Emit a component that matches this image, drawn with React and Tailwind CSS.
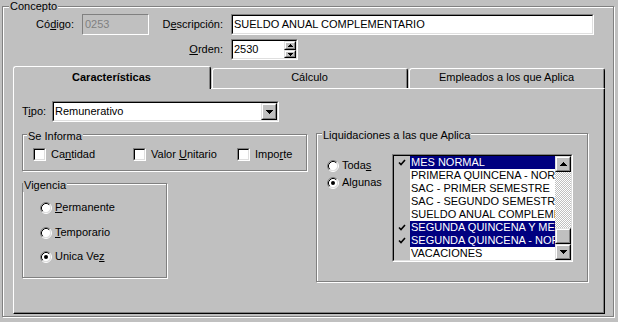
import React from 'react';

const Sunken = ({ className = '', inner = '', children }) => (
  <div className={`border border-t-[#808080] border-l-[#808080] border-b-white border-r-white ${className}`}>
    <div className={`h-full border border-t-black border-l-black border-b-[#dfdfdf] border-r-[#dfdfdf] ${inner}`}>
      {children}
    </div>
  </div>
);

const Raised = ({ className = '', children }) => (
  <div className={`border border-t-[#dfdfdf] border-l-[#dfdfdf] border-b-black border-r-black bg-[#c0c0c0] ${className}`}>
    <div className="flex h-full items-center justify-center border border-t-white border-l-white border-b-[#808080] border-r-[#808080]">
      {children}
    </div>
  </div>
);

const Group = ({ title, className = '', titleClass = '', children }) => (
  <div className={`border border-[#808080] shadow-[inset_1px_1px_0_#fff,1px_1px_0_#fff] ${className}`}>
    <div className={`w-fit bg-[#c0c0c0] px-px ${titleClass}`}>{title}</div>
    {children}
  </div>
);

const Arrow = ({ up, w = 7, h = 4 }) => (
  <svg width={w} height={h} viewBox={`0 0 ${w} ${h}`} shapeRendering="crispEdges">
    <polygon points={up ? `0,${h} ${w},${h} ${w / 2},0` : `0,0 ${w},0 ${w / 2},${h}`} fill="#000" />
  </svg>
);

const RadioDot = ({ checked }) => (
  <svg width="12" height="12" viewBox="0 0 12 12" className="shrink-0">
    <circle cx="6" cy="6" r="4.5" fill="#fff" />
    <path d="M2.11 9.89 A5.5 5.5 0 0 1 9.89 2.11" stroke="#808080" fill="none" />
    <path d="M9.89 2.11 A5.5 5.5 0 0 1 2.11 9.89" stroke="#fff" fill="none" />
    <path d="M2.82 9.18 A4.5 4.5 0 0 1 9.18 2.82" stroke="#000" fill="none" />
    <path d="M9.18 2.82 A4.5 4.5 0 0 1 2.82 9.18" stroke="#dfdfdf" fill="none" />
    {checked && <circle cx="6" cy="6" r="2" fill="#000" />}
  </svg>
);

const Radio = ({ checked, className = '', children }) => (
  <div className={`flex h-[13px] items-center ${className}`}>
    <RadioDot checked={checked} />
    <span className="ml-[3px]">{children}</span>
  </div>
);

const CheckBox = ({ className = '', children }) => (
  <div className={`flex h-[13px] items-center ${className}`}>
    <Sunken className="h-[13px] w-[13px] shrink-0" inner="bg-white" />
    <span className="ml-[5px]">{children}</span>
  </div>
);

const Tick = () => (
  <svg width="8" height="7" viewBox="0 0 8 7">
    <path d="M1 3.5 L3 5.5 L7 1" stroke="#000" strokeWidth="1.6" fill="none" />
  </svg>
);

const Tab = ({ className = '', children }) => (
  <div className={`h-[20px] rounded-t-[3px] border-l border-r border-t border-l-white border-r-black border-t-white ${className}`}>
    <div className="h-full border-r border-[#808080] pt-[2px] text-center">{children}</div>
  </div>
);

const liquidaciones = [
  { name: 'MES NORMAL', checked: true },
  { name: 'PRIMERA QUINCENA - NORMAL', checked: false },
  { name: 'SAC - PRIMER SEMESTRE', checked: false },
  { name: 'SAC - SEGUNDO SEMESTRE', checked: false },
  { name: 'SUELDO ANUAL COMPLEMENTARIO', checked: false },
  { name: 'SEGUNDA QUINCENA Y MES', checked: true },
  { name: 'SEGUNDA QUINCENA - NORMAL', checked: true },
  { name: 'VACACIONES', checked: false },
];

export default function App() {
  return (
    <div className="h-[322px] w-[618px] overflow-hidden bg-[#c0c0c0] pt-[6px] font-['Liberation_Sans',Arial,sans-serif] text-[11px] leading-[13px] text-black">
      <Group title="Concepto" className="ml-[2px] h-[311px] w-[612px]" titleClass="-mt-[7px] ml-[6px]">
        {/* Código / Descripción */}
        <div className="mt-px flex h-[21px] items-center">
          <span className="w-[71px] text-right">Có<u>d</u>igo:</span>
          <div className="ml-[8px] flex h-[21px] w-[67px] items-center border border-t-[#808080] border-l-[#808080] border-b-white border-r-white pl-[2px] text-[#808080]">
            0253
          </div>
          <span className="w-[74px] text-right">D<u>e</u>scripción:</span>
          <Sunken className="ml-[8px] h-[21px] w-[363px]" inner="flex items-center bg-white pl-px">
            SUELDO ANUAL COMPLEMENTARIO
          </Sunken>
        </div>

        {/* Orden */}
        <div className="mt-[4px] flex h-[21px] items-center">
          <span className="w-[220px] text-right"><u>O</u>rden:</span>
          <Sunken className="ml-[8px] h-[21px] w-[67px]" inner="flex bg-white">
            <span className="flex-1 self-center pl-px">2530</span>
            <div className="flex w-[12px] flex-col">
              <Raised className="h-[9px]"><Arrow up w={5} h={3} /></Raised>
              <Raised className="h-[8px]"><Arrow w={5} h={3} /></Raised>
            </div>
          </Sunken>
        </div>

        {/* Tabs */}
        <div className="ml-[10px] mt-[6px] w-[592px]">
          <div className="flex h-[22px] items-end">
            <div className="relative z-10 -mb-px h-[23px] w-[198px] rounded-t-[3px] border-l border-r border-t border-l-white border-r-black border-t-white bg-[#c0c0c0]">
              <div className="h-full border-r border-[#808080] pt-[4px] text-center font-bold">Características</div>
            </div>
            <Tab className="ml-px w-[196px]">Cálculo</Tab>
            <Tab className="ml-px w-[196px]">Empleados a los que Aplica</Tab>
          </div>

          <div className="h-[226px] border border-t-white border-l-white border-b-black border-r-black shadow-[inset_-1px_-1px_0_#808080]">
            {/* Tipo */}
            <div className="ml-[8px] mt-[12px] flex h-[21px] items-center">
              <span className="w-[30px]">T<u>i</u>po:</span>
              <Sunken className="h-[21px] w-[227px]" inner="flex bg-white">
                <span className="flex-1 self-center pl-px">Remunerativo</span>
                <Raised className="h-full w-[16px]"><Arrow /></Raised>
              </Sunken>
            </div>

            <div className="ml-[8px] mt-[11px] flex items-start">
              <div>
                <Group title="Se Informa" className="mt-px h-[37px] w-[285px]" titleClass="-mt-[5px] ml-[4px]">
                  <div className="mt-[5px] flex">
                    <CheckBox className="ml-[10px] w-[100px]">Ca<u>n</u>tidad</CheckBox>
                    <CheckBox className="w-[104px]">Valor <u>U</u>nitario</CheckBox>
                    <CheckBox>Impo<u>r</u>te</CheckBox>
                  </div>
                </Group>

                <Group title="Vigencia" className="mt-[12px] h-[95px] w-[145px]" titleClass="-mt-[5px]">
                  <Radio className="ml-[17px] mt-[9px]"><u>P</u>ermanente</Radio>
                  <Radio className="ml-[17px] mt-[12px]"><u>T</u>emporario</Radio>
                  <Radio checked className="ml-[17px] mt-[11px]">Unica Ve<u>z</u></Radio>
                </Group>
              </div>

              <Group title="Liquidaciones a las que Aplica" className="ml-[9px] h-[149px] w-[272px]" titleClass="-mt-[5px] ml-[5px]">
                <div className="mt-[12px] flex items-start">
                  <div className="mt-[5px] w-[75px]">
                    <Radio className="ml-[10px]">Toda<u>s</u></Radio>
                    <Radio checked className="ml-[10px] mt-[4px]">Algunas</Radio>
                  </div>
                  <Sunken className="h-[108px] w-[181px]" inner="flex bg-white">
                    <div className="flex w-[161px] flex-col">
                      {liquidaciones.map((l) => (
                        <div key={l.name} className="flex h-[13px]">
                          <div className="flex w-[16px] items-center justify-center bg-[#c0c0c0]">
                            {l.checked && <Tick />}
                          </div>
                          <div
                            className={`w-[145px] overflow-hidden whitespace-nowrap pl-px ${
                              l.checked ? 'bg-[#000080] text-white' : 'bg-white'
                            }`}
                          >
                            {l.name}
                          </div>
                        </div>
                      ))}
                    </div>
                    <div className="flex w-[16px] flex-col">
                      <Raised className="h-[16px]"><Arrow up /></Raised>
                      <div className="h-[56px] bg-[image:repeating-conic-gradient(#fff_0%_25%,#c0c0c0_0%_50%)] bg-[length:2px_2px]" />
                      <Raised className="h-[16px]" />
                      <Raised className="h-[16px]"><Arrow /></Raised>
                    </div>
                  </Sunken>
                </div>
              </Group>
            </div>
          </div>
        </div>
      </Group>
    </div>
  );
}
